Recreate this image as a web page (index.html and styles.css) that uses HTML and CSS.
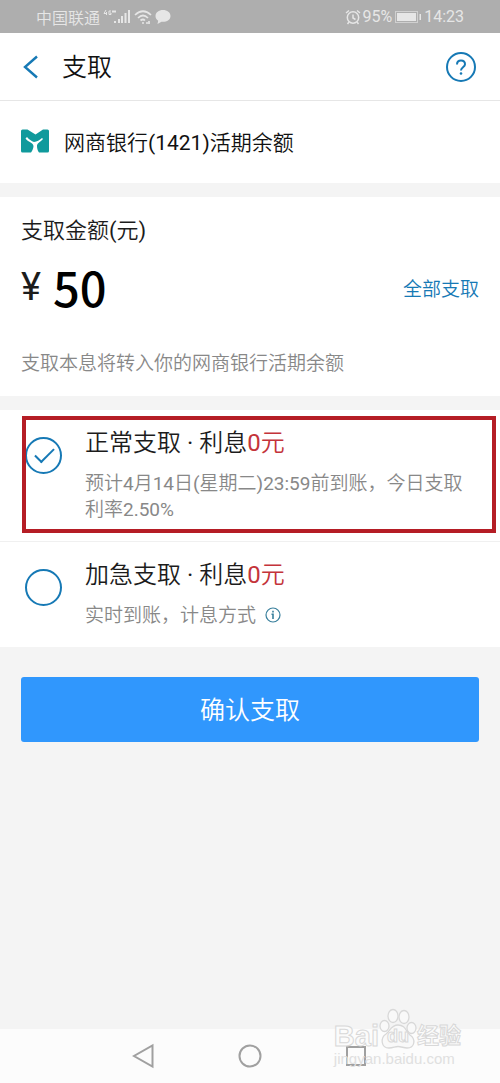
FILE: index.html
```
<!DOCTYPE html>
<html lang="zh-CN">
<head>
<meta charset="utf-8">
<meta name="viewport" content="width=device-width, initial-scale=1">
<title>支取</title>
<link rel="stylesheet" href="styles.css">
</head>
<body>
<div class="screen">
  <div class="status">
    <div class="status-group">
      <span>中国联通</span>
      <svg width="28" height="18" viewBox="0 0 28 18" fill="none" stroke="currentColor">
        <path stroke-width="1" d="M3 2L1 5.500H4M3.500 4V7M8 3H6V6.500H8V5H7M10 2V5M12 2V5M9 3.500H13"/>
        <path stroke-width="2" d="M12 13V15M16 11V15M19 8V15M22.500 5V15M26 2V15"/>
      </svg>
      <svg width="18" height="18" viewBox="0 0 18 18" fill="none" stroke="currentColor" stroke-width="1.700">
        <path d="M1 7Q9 -.500 17 7M4 10Q9 5 14 10M6.500 12.500Q9 10.500 11 12.500"/>
        <path d="M8 15H10M12 15H14M15 13V16"/>
      </svg>
      <svg width="16" height="16" viewBox="0 0 16 16" fill="currentColor">
        <path d="M8 1C3.800 1 .500 3.500.500 7c0 2 1 3.700 2.700 4.800L2.500 15l4-2.200c5 .500 9-2 9-5.800C15.500 3.500 12.200 1 8 1z"/>
      </svg>
    </div>
    <div class="status-group battery-group">
      <svg width="16" height="16" viewBox="0 0 16 16" fill="none" stroke="currentColor" stroke-width="1.500">
        <circle cx="8" cy="8.500" r="5.700"/><path d="M8 5.500V9L10.500 10.500M1 4L4 1.500M15 4L12 1.500M4 13L2.500 15M12 13L13.500 15"/>
      </svg>
      <span>95%</span>
      <svg class="battery" width="28" height="14" viewBox="0 0 28 14" fill="none" stroke="currentColor">
        <rect x=".500" y="1.500" width="22" height="11" stroke-opacity=".6"/><path fill="currentColor" stroke="none" d="M2 3H21V11H2zM24.500 4H26V10H24.500z"/>
      </svg>
      <span>14:23</span>
    </div>
  </div>

  <header class="header">
    <button class="icon-button" type="button" aria-label="返回">
      <svg width="16" height="24" viewBox="0 0 16 24" fill="none" stroke="currentColor" stroke-width="2.400"><path d="M15 1.500L3 12L15 22.500"/></svg>
    </button>
    <h1 class="title">支取</h1>
    <button class="icon-button" type="button" aria-label="帮助">
      <svg width="32" height="32" viewBox="0 0 32 32" fill="none" stroke="currentColor" stroke-width="2">
        <circle cx="16" cy="16" r="14"/>
        <path d="M12 13.500C12 11 13.700 9.500 16 9.500s4 1.500 4 3.700c0 3-4 3.300-4 6.300"/>
        <circle cx="16" cy="22.500" r="1.300" fill="currentColor" stroke="none"/>
      </svg>
    </button>
  </header>

  <section class="bank">
    <svg width="28" height="24" viewBox="0 0 28 24">
      <path fill="#109a9c" d="M1.500 .500H6.500L14.500 5.500L22 .500H26.500Q28 .500 28 2V22Q28 23.500 26.500 23.500H18C16.500 21.500 16 19 16 17C16 14 19.500 13 22 10L21 9C18.500 11.500 16 12.500 13 13C10.500 12 8 10.500 6 8L4.500 9.500C7 13 12 13.500 12.500 17C12.500 19 11.500 21.500 10 23.500H1.500Q0 23.500 0 22V2Q0 .500 1.500 .500z"/>
    </svg>
    <span>网商银行(1421)活期余额</span>
  </section>

  <section class="amount">
    <label class="amount-label" for="amount">支取金额(元)</label>
    <div class="amount-row">
      <span class="currency">¥</span>
      <input class="amount-input" id="amount" type="text" inputmode="decimal" value="50">
      <button class="all" type="button">全部支取</button>
    </div>
    <p class="note">支取本息将转入你的网商银行活期余额</p>
  </section>

  <section class="options">
    <div class="option highlighted">
      <input class="radio" type="radio" name="mode" id="normal" checked>
      <label class="option-text" for="normal">
        <span class="option-title">正常支取 · 利息<span class="interest">0元</span></span>
        <span class="option-desc">预计4月14日(星期二)23:59前到账，今日支取利率2.50%</span>
      </label>
    </div>
    <div class="option">
      <input class="radio" type="radio" name="mode" id="urgent">
      <label class="option-text" for="urgent">
        <span class="option-title">加急支取 · 利息<span class="interest">0元</span></span>
        <span class="option-desc">实时到账，计息方式
          <svg class="info" width="16" height="16" viewBox="0 0 16 16" fill="none" stroke="currentColor" stroke-width="1.200"><circle cx="8" cy="8" r="7"/><path stroke-width="1.600" d="M8 3.800V5.400M6.500 7.200H8V12"/></svg>
        </span>
      </label>
    </div>
  </section>

  <main class="action"><button class="confirm" type="button">确认支取</button></main>

  <nav class="nav">
    <button class="nav-button" type="button" aria-label="后退"><svg width="24" height="26" viewBox="0 0 24 26"><path d="M20.500 2.500V23.500L2 13z"/></svg></button>
    <button class="nav-button" type="button" aria-label="主页"><svg width="26" height="26" viewBox="0 0 26 26"><circle cx="13" cy="13" r="10.500"/></svg></button>
    <button class="nav-button" type="button" aria-label="最近"><svg width="24" height="24" viewBox="0 0 24 24"><rect x="3" y="3" width="18" height="18"/></svg></button>
  </nav>

  <div class="watermark">
    <div class="brand">
      <span>Bai</span>
      <span class="paw">
        <svg width="38" height="42" viewBox="0 0 38 42" fill="#f9f9f9" stroke="#d8d8d8" stroke-width="1.300">
          <ellipse cx="5.500" cy="18" rx="4.500" ry="5.500"/><ellipse cx="14" cy="8" rx="5" ry="6.500"/><ellipse cx="25" cy="9" rx="5" ry="6.500"/><ellipse cx="32.500" cy="20" rx="4.500" ry="5.500"/>
          <path d="M19 17C12 17 11 23 7 26C1 30 2 40 10 40C14 40 16 38.500 19 38.500S25 40 28 40C36 40 37 31 31 27C27 23 26 17 19 17z"/>
        </svg>
        <span class="du">du</span>
      </span>
      <span class="brand-cn">经验</span>
    </div>
    <div class="site">jingyan.baidu.com</div>
  </div>
</div>
</body>
</html>
```
FILE: styles.css
```
* { box-sizing: border-box; }
body {
  margin: 0;
  background: #f4f4f4;
  color: #1c1c1c;
  font-family: Roboto, "Noto Sans CJK SC DemiLight", "Noto Sans CJK SC", sans-serif;
  font-weight: 400;
}
button {
  margin: 0;
  padding: 0;
  border: 0;
  background: none;
  color: inherit;
  font: inherit;
}
svg { display: block; flex: none; }
.screen {
  position: relative;
  display: flex;
  flex-direction: column;
  min-height: 100vh;
}
.status {
  display: flex;
  justify-content: space-between;
  align-items: center;
  height: 33px;
  padding: 0 36px;
  background: #aeaeae;
  color: #e6e6e6;
  font-size: 16px;
}
.status-group { display: flex; align-items: center; gap: 3px; }
.battery-group { gap: 1px; }
.battery { margin-left: 2px; }
.header {
  display: flex;
  align-items: center;
  height: 68px;
  padding: 0 23px 0 22px;
  border-bottom: 1px solid #e6e6e6;
  background: #fff;
}
.icon-button { color: #1679b5; }
.title {
  flex: 1;
  margin: 0 0 3px 24px;
  color: #111;
  font-size: 25px;
  font-weight: 400;
}
.bank {
  display: flex;
  align-items: center;
  gap: 15px;
  height: 82px;
  padding: 0 21px 3px;
  background: #fff;
  color: #111;
  font-size: 21px;
}
.amount {
  margin-top: 14px;
  padding: 17px 21px;
  background: #fff;
}
.amount-label { display: block; font-size: 22px; line-height: 34px; }
.amount-row { display: flex; align-items: center; height: 78px; }
.currency {
  width: 32px;
  font-size: 38px;
  line-height: 38px;
}
.amount-input {
  flex: 1;
  min-width: 0;
  padding: 0;
  border: 0;
  outline: 0;
  background: none;
  color: #000;
  font: 500 47px/64px "Noto Sans CJK SC", sans-serif;
}
.all { color: #1679b5; font-size: 19px; }
.note {
  margin: 22px 0 0;
  color: #888;
  font-size: 19px;
  line-height: 31px;
}
.options { margin-top: 14px; background: #fff; }
.option {
  position: relative;
  display: flex;
  align-items: flex-start;
  gap: 23px;
  padding: 17px 23px 18px 25px;
}
.option + .option { border-top: 1px solid #f0f0f0; }
.highlighted::after {
  content: "";
  position: absolute;
  inset: 6px 4px 8px 22px;
  border: 4px solid #b51d25;
  pointer-events: none;
}
.radio {
  flex: none;
  width: 37px;
  height: 37px;
  margin: 10px 0 0;
  appearance: none;
  border: 2px solid #1679b5;
  border-radius: 50%;
}
.radio:checked::before {
  content: "";
  display: block;
  width: 17px;
  height: 8px;
  margin: 9px 8px;
  border: solid #1679b5;
  border-width: 0 0 2px 2px;
  transform: rotate(-45deg);
}
.option-text { flex: 1; }
.option-title { display: block; font-size: 24px; line-height: 32px; }
.interest { color: #c4333a; }
.option-desc {
  display: block;
  margin-top: 12px;
  color: #888;
  font-size: 19px;
  line-height: 26px;
}
.info {
  display: inline-block;
  margin-left: 4px;
  vertical-align: -1px;
  color: #387f9c;
}
.action { flex: 1; padding: 30px 21px; }
.confirm {
  width: 100%;
  height: 65px;
  padding-bottom: 3px;
  border-radius: 3px;
  background: #3097fd;
  color: #fff;
  font-size: 25px;
}
.nav {
  display: flex;
  justify-content: center;
  align-items: center;
  gap: 81px;
  height: 54px;
  background: #fcfcfc;
}
.nav svg { fill: none; stroke: #a0a0a0; stroke-width: 2; }
.watermark {
  position: absolute;
  right: 39px;
  bottom: 16px;
  color: #fbfbfb;
  font-family: "Liberation Sans", "Noto Sans CJK SC", sans-serif;
  font-weight: 700;
  -webkit-text-stroke: 1px #d8d8d8;
}
.brand { display: flex; align-items: flex-end; font-size: 29px; line-height: 28px; }
.paw { position: relative; }
.du {
  position: absolute;
  inset: auto 0 5px;
  text-align: center;
  font-size: 18px;
  line-height: 18px;
}
.brand-cn { font-size: 22px; }
.site {
  color: #e0e0e0;
  font-size: 15px;
  line-height: 17px;
  font-weight: 400;
  -webkit-text-stroke: 0;
}
```
